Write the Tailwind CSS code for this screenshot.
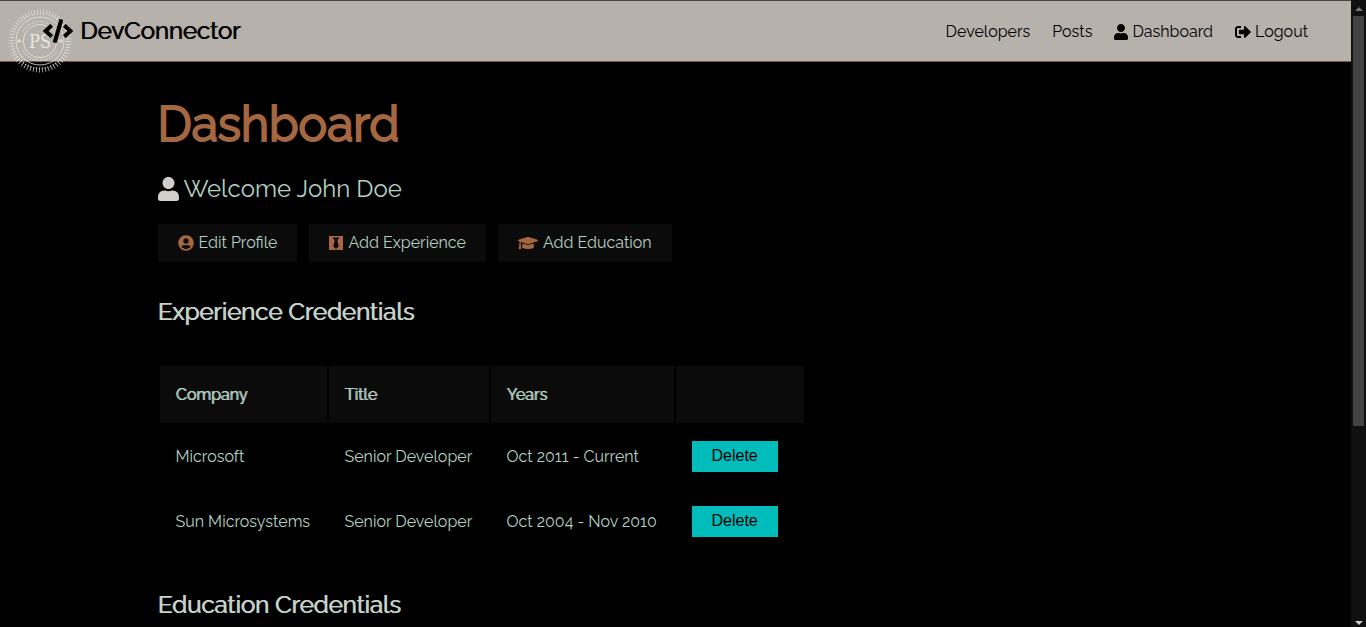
<!DOCTYPE html>
<html lang="en">
<head>
<meta charset="utf-8">
<meta name="viewport" content="width=device-width, initial-scale=1">
<title>DevConnector</title>
<script src="https://cdn.jsdelivr.net/npm/@tailwindcss/browser@4"></script>
</head>
<body class="bg-black font-['Raleway','Lato',sans-serif] text-base leading-6 text-[#b4cfc3]">
<svg class="hidden" aria-hidden="true">
  <symbol id="user" viewBox="0 0 448 512"><path d="M224 256c70.700 0 128-57.300 128-128S294.700 0 224 0 96 57.300 96 128s57.300 128 128 128zm89.600 32h-16.700c-22.200 10.200-46.900 16-72.900 16s-50.600-5.800-72.900-16h-16.700C60.200 288 0 348.200 0 422.400V464c0 26.500 21.500 48 48 48h352c26.500 0 48-21.500 48-48v-41.600c0-74.200-60.200-134.400-134.400-134.400z"/></symbol>
  <symbol id="logout" viewBox="0 0 512 512"><path d="M497 273L329 441c-15 15-41 4.500-41-17v-96H152c-13.300 0-24-10.700-24-24v-96c0-13.300 10.700-24 24-24h136V88c0-21.400 25.900-32 41-17l168 168c9.300 9.400 9.300 24.600 0 34zM192 436v-40c0-6.600-5.400-12-12-12H96c-17.700 0-32-14.300-32-32V160c0-17.700 14.300-32 32-32h84c6.600 0 12-5.400 12-12V76c0-6.600-5.400-12-12-12H96c-53 0-96 43-96 96v192c0 53 43 96 96 96h84c6.600 0 12-5.400 12-12z"/></symbol>
  <symbol id="circle" viewBox="0 0 496 512"><path d="M248 8C111 8 0 119 0 256s111 248 248 248 248-111 248-248S385 8 248 8zm0 96c48.600 0 88 39.400 88 88s-39.400 88-88 88-88-39.400-88-88 39.400-88 88-88zm0 344c-58.700 0-111.300-26.600-146.500-68.200 18.800-35.400 55.600-59.800 98.500-59.800 2.400 0 4.800.4 7.100 1.100 13 4.200 26.600 6.900 40.900 6.900s28-2.700 40.900-6.900c2.300-.7 4.700-1.100 7.100-1.100 42.900 0 79.700 24.400 98.500 59.800C359.300 421.400 306.700 448 248 448z"/></symbol>
  <symbol id="tie" viewBox="0 0 448 512"><path fill-rule="evenodd" d="M0 32h448v448H0zM128 80h192v48h-28l-24 48 44 184-88 88-88-88 44-184-24-48h-28z"/></symbol>
  <symbol id="cap" viewBox="0 0 640 512"><path d="M622.300 153.200L343.400 67.500c-15.200-4.700-31.600-4.700-46.800 0L17.700 153.200c-23.600 7.300-23.600 38.300 0 45.600l48.600 14.900c-10.700 13.200-17.200 29.300-17.800 46.900C38.800 266.200 32 276.100 32 288c0 10.800 5.700 19.900 13.900 25.700L20.300 428.500C18.100 438.500 25.700 448 35.900 448h56.200c10.200 0 17.800-9.500 15.600-19.500L82.100 313.700C90.300 307.900 96 298.800 96 288c0-11.600-6.500-21.200-15.700-26.900.8-15 8.400-28.300 20.700-36.700L296.600 284.500c9.100 2.800 26.400 6.200 46.800 0l278.900-85.700c23.600-7.200 23.600-38.300 0-45.600zM352.800 315.100c-28.500 8.800-52.700 3.800-65.600 0L145 271.400 128 384c0 35.300 86 64 192 64s192-28.700 192-64l-17-112.600-142.200 43.700z"/></symbol>
  <symbol id="code" viewBox="0 0 640 512"><path d="M278.900 511.500l-61-17.700c-6.400-1.800-10-8.500-8.200-14.900L346.200 8.700c1.800-6.400 8.500-10 14.900-8.200l61 17.700c6.400 1.800 10 8.500 8.200 14.900L293.800 503.300c-1.900 6.400-8.500 10.100-14.900 8.200zm-114-112.200l43.500-46.400c4.600-4.900 4.300-12.700-.8-17.200L117 256l90.600-79.700c5.100-4.500 5.500-12.300.8-17.200l-43.500-46.400c-4.500-4.800-12.100-5.100-17-.5L3.800 247.200c-5.100 4.700-5.100 12.800 0 17.500l144.100 135.100c4.900 4.600 12.500 4.400 17-.5zm327.200.6l144.100-135.100c5.100-4.700 5.100-12.800 0-17.500L492.100 112.100c-4.800-4.500-12.400-4.300-17 .5L431.600 159c-4.600 4.900-4.300 12.700.8 17.200L523 256l-90.600 79.700c-5.100 4.500-5.500 12.300-.8 17.200l43.500 46.400c4.500 4.900 12.100 5.100 17 .6z"/></symbol>
</svg>
<div class="flex h-screen overflow-hidden">
  <div class="min-w-0 flex-1">
    <nav class="relative flex h-[62px] items-center justify-between border-t border-b border-t-[#4b4441] border-b-[#7a5745] bg-[#b6b1ab] pr-[43px] pl-[43px] text-black">
      <svg class="pointer-events-none absolute top-2 left-2 size-16 text-[#e9e7e4]" viewBox="0 0 64 64" fill="none" stroke="currentColor" aria-hidden="true">
        <circle cx="32" cy="32" r="27.500" stroke-width="2" stroke-dasharray="1 1.880"/>
        <circle cx="32" cy="32" r="30" stroke-width="3" stroke-dasharray=".8 2.342" opacity=".8"/>
        <circle cx="32" cy="32" r="24" stroke-width=".8"/>
        <circle cx="32" cy="32" r="16.500" stroke-width=".8"/>
        <path d="M9 32h5M50 32h5M11 30v4M53 30v4" stroke-width="1"/>
        <path d="M15 22A20 20 0 0 1 49 22M15 42A20 20 0 0 0 49 42" stroke-width="2" stroke-dasharray="1 1.500" opacity=".7"/>
        <text x="32" y="39" text-anchor="middle" fill="currentColor" stroke="none" class="font-['DejaVu_Serif_Condensed','Liberation_Serif',serif] text-[18px]">PS</text>
      </svg>
      <a href="#" class="relative flex items-center gap-[7px] text-2xl leading-8 [text-shadow:1px_0_0_currentColor]"><svg class="h-6 w-[30px] fill-current" aria-hidden="true"><use href="#code"/></svg>DevConnector</a>
      <ul class="flex items-center gap-[22px] pt-[2px]">
        <li><a href="#">Developers</a></li>
        <li><a href="#">Posts</a></li>
        <li><a href="#" class="flex items-center gap-1"><svg class="h-4 w-[14px] fill-current" aria-hidden="true"><use href="#user"/></svg>Dashboard</a></li>
        <li><a href="#" class="flex items-center gap-1"><svg class="size-4 fill-current" aria-hidden="true"><use href="#logout"/></svg>Logout</a></li>
      </ul>
    </nav>
    <main class="mx-auto max-w-[1100px] px-8 pt-8">
      <h1 class="text-5xl leading-[60px] text-[#a5673f] [-webkit-text-stroke:2px]">Dashboard</h1>
      <p class="mt-[17px] flex items-center gap-[5px] text-2xl leading-9"><svg class="h-6 w-[21px] fill-[#d0cfcd]" aria-hidden="true"><use href="#user"/></svg>Welcome John Doe</p>
      <div class="mt-[17px] flex gap-3">
        <a href="#" class="flex h-[38px] items-center gap-[5px] bg-[#0b0b0b] px-5"><svg class="size-4 fill-[#a5673f]" aria-hidden="true"><use href="#circle"/></svg>Edit Profile</a>
        <a href="#" class="flex h-[38px] items-center gap-[5px] bg-[#0b0b0b] px-5"><svg class="h-4 w-[14px] fill-[#a5673f]" aria-hidden="true"><use href="#tie"/></svg>Add Experience</a>
        <a href="#" class="flex h-[38px] items-center gap-[5px] bg-[#0b0b0b] px-5"><svg class="h-4 w-5 fill-[#a5673f]" aria-hidden="true"><use href="#cap"/></svg>Add Education</a>
      </div>
      <h2 class="mt-8 text-2xl leading-9 text-[#c6d3cc] [text-shadow:1px_0_0_currentColor]">Experience Credentials</h2>
      <table class="mt-[34px] border-separate border-spacing-[2px] text-left whitespace-nowrap">
        <thead>
          <tr class="h-[57px] [text-shadow:1px_0_0_currentColor]">
            <th class="w-[167px] bg-[#0b0b0b] px-4 font-normal">Company</th>
            <th class="w-[160px] bg-[#0b0b0b] px-4 font-normal">Title</th>
            <th class="w-[183px] bg-[#0b0b0b] px-4 font-normal">Years</th>
            <th class="w-[128px] bg-[#0b0b0b] px-4"></th>
          </tr>
        </thead>
        <tbody>
          <tr class="h-[63px]">
            <td class="px-4">Microsoft</td>
            <td class="px-4">Senior Developer</td>
            <td class="px-4">Oct 2011 - Current</td>
            <td class="px-4"><button type="button" class="block bg-[#00bcbb] px-5 pt-[3px] pb-1 font-['Liberation_Sans',sans-serif] text-base text-black">Delete</button></td>
          </tr>
          <tr class="h-[63px]">
            <td class="px-4">Sun Microsystems</td>
            <td class="px-4">Senior Developer</td>
            <td class="px-4">Oct 2004 - Nov 2010</td>
            <td class="px-4"><button type="button" class="block bg-[#00bcbb] px-5 pt-[3px] pb-1 font-['Liberation_Sans',sans-serif] text-base text-black">Delete</button></td>
          </tr>
        </tbody>
      </table>
      <h2 class="mt-8 text-2xl leading-9 text-[#c6d3cc] [text-shadow:1px_0_0_currentColor]">Education Credentials</h2>
    </main>
  </div>
  <div class="flex w-[15px] flex-col items-center bg-[#101010]" aria-hidden="true">
    <svg class="h-4 w-2 fill-[#777]" viewBox="0 0 8 16"><path d="M0 11l4-4 4 4z"/></svg>
    <div class="h-[410px] w-[11px] bg-[#424242]"></div>
    <svg class="mt-auto h-2 w-2 fill-[#ccc]" viewBox="0 0 8 8"><path d="M0 2l4 4 4-4z"/></svg>
  </div>
</div>
</body>
</html>
